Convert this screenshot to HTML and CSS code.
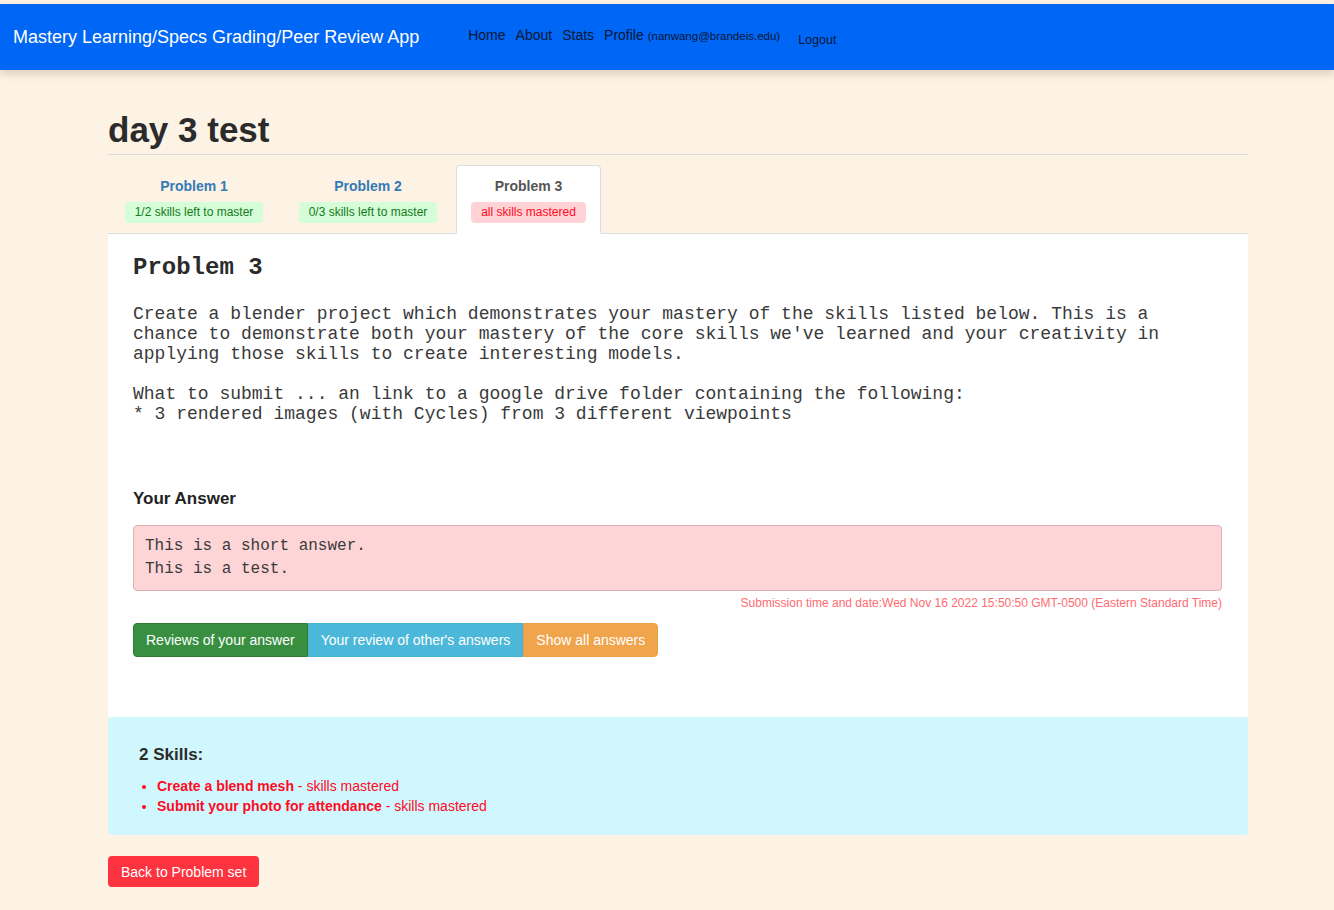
FILE: index.html
```html
<!DOCTYPE html>
<html>
<head>
<meta charset="utf-8">
<title>day 3 test</title>
<link rel="stylesheet" href="styles.css">
</head>
<body>
<nav class="navbar">
  <span class="brand">Mastery Learning/Specs Grading/Peer Review App</span>
  <ul class="nav-links">
    <li>Home</li>
    <li>About</li>
    <li>Stats</li>
    <li>Profile <small class="email">(nanwang@brandeis.edu)</small></li>
    <li class="logout">Logout</li>
  </ul>
</nav>

<main class="container">
  <h1 class="page-title">day 3 test</h1>

  <ul class="tabs">
    <li class="tab">
      <span class="tab-label link">Problem 1</span>
      <span class="badge badge-green">1/2 skills left to master</span>
    </li>
    <li class="tab">
      <span class="tab-label link">Problem 2</span>
      <span class="badge badge-green">0/3 skills left to master</span>
    </li>
    <li class="tab active">
      <span class="tab-label">Problem 3</span>
      <span class="badge badge-red">all skills mastered</span>
    </li>
  </ul>

  <section class="panel">
    <h2 class="problem-title">Problem 3</h2>
    <pre class="problem-text">Create a blender project which demonstrates your mastery of the skills listed below. This is a
chance to demonstrate both your mastery of the core skills we've learned and your creativity in
applying those skills to create interesting models.

What to submit ... an link to a google drive folder containing the following:
* 3 rendered images (with Cycles) from 3 different viewpoints</pre>

    <h4 class="answer-title">Your Answer</h4>
    <div class="answer-box">This is a short answer.<br>This is a test.</div>
    <p class="submission">Submission time and date:Wed Nov 16 2022 15:50:50 GMT-0500 (Eastern Standard Time)</p>

    <div class="btn-group">
      <button class="btn btn-green">Reviews of your answer</button>
      <button class="btn btn-cyan">Your review of other's answers</button>
      <button class="btn btn-orange">Show all answers</button>
    </div>
  </section>

  <section class="skills">
    <h3 class="skills-title">2 Skills:</h3>
    <ul class="skills-list">
      <li><strong>Create a blend mesh</strong> - skills mastered</li>
      <li><strong>Submit your photo for attendance</strong> - skills mastered</li>
    </ul>
  </section>

  <button class="btn-back">Back to Problem set</button>
</main>
</body>
</html>
```

FILE: styles.css
```css
* { box-sizing: border-box; }

html, body {
  margin: 0;
  padding: 0;
}

body {
  background: #fdf3e4;
  font-family: "Liberation Sans", Arial, Helvetica, sans-serif;
  color: #333;
  padding-top: 4px;
  min-height: 910px;
}

.navbar {
  height: 66px;
  background: #0066f5;
  display: flex;
  align-items: center;
  padding-left: 13px;
  box-shadow: 0 4px 8px rgba(120, 100, 70, 0.25);
}

.brand {
  color: #fff;
  font-size: 18px;
  margin-right: 49px;
}

.nav-links {
  list-style: none;
  margin: 0;
  padding: 0;
  display: flex;
  align-items: baseline;
  gap: 10px;
  margin-top: -4px;
}

.nav-links li {
  font-size: 14px;
  color: #0b1733;
}

.email {
  font-size: 11.5px;
}

.nav-links .logout {
  font-size: 12.5px;
  margin-left: 8px;
  position: relative;
  top: 4px;
}

.container {
  width: 1140px;
  margin: 0 86px 0 108px;
}

.page-title {
  font-size: 35px;
  font-weight: bold;
  margin: 40px 0 10px;
  line-height: 40px;
  padding-bottom: 4px;
  border-bottom: 1px solid #dcdcdc;
  color: #2b2b2b;
}

.tabs {
  list-style: none;
  margin: 0;
  padding: 0;
  display: flex;
  border-bottom: 1px solid #dddddd;
}

.tab {
  display: flex;
  flex-direction: column;
  align-items: center;
  padding: 12px 15px 10px;
  margin-right: 2px;
  margin-bottom: -1px;
  border: 1px solid transparent;
  border-radius: 4px 4px 0 0;
  width: 172px;
}

.tab.active {
  width: 145px;
  background: #fff;
  border-color: #ddd;
  border-bottom-color: #fff;
}

.tab-label {
  font-size: 14px;
  font-weight: bold;
  line-height: 17px;
  color: #555;
  margin-bottom: 7px;
}

.tab-label.link {
  color: #337ab7;
}

.badge {
  display: block;
  font-size: 12px;
  line-height: 21px;
  height: 21px;
  padding: 0 10px;
  border-radius: 4px;
  white-space: nowrap;
}

.badge-green {
  background: #d4fdd8;
  color: #147a1a;
}

.badge-red {
  background: #ffd3d6;
  color: #ff0a1e;
}

.panel {
  background: #fff;
  padding: 20px 26px 60px 25px;
}

.problem-title {
  font-family: "Liberation Mono", "Courier New", monospace;
  font-size: 24px;
  font-weight: bold;
  line-height: 28px;
  margin: 0 0 22px;
  color: #2b2b2b;
}

.problem-text {
  font-family: "Liberation Mono", "Courier New", monospace;
  font-size: 18px;
  line-height: 20px;
  margin: 0 0 65px;
  color: #3a3a3a;
}

.answer-title {
  font-size: 17px;
  font-weight: bold;
  line-height: 20px;
  margin: 0 0 16px;
  color: #222;
}

.answer-box {
  background: #fdd5d6;
  border: 1px solid #dcb2b3;
  border-radius: 4px;
  padding: 9px 11px;
  font-family: "Liberation Mono", "Courier New", monospace;
  font-size: 16px;
  line-height: 23px;
  color: #3a3a3a;
}

.submission {
  text-align: right;
  font-size: 12px;
  line-height: 14px;
  color: #ff6b70;
  margin: 5px 0 13px;
}

.btn-group {
  display: flex;
}

.btn {
  font-family: "Liberation Sans", Arial, sans-serif;
  font-size: 14px;
  color: #fff;
  height: 34px;
  padding: 0 12px;
  border: 1px solid transparent;
  cursor: pointer;
}

.btn-green {
  background: #378f3f;
  border-color: #2f7d36;
  border-radius: 4px 0 0 4px;
}

.btn-cyan {
  background: #4bb8d9;
  border-color: #46b3d4;
}

.btn-orange {
  background: #f0a44c;
  border-color: #ec9f45;
  border-radius: 0 4px 4px 0;
}

.skills {
  background: #d1f7fe;
  border-radius: 4px;
  padding: 27px 31px 19px;
}

.skills-title {
  font-size: 17px;
  font-weight: bold;
  line-height: 22px;
  margin: 0 0 10px;
  color: #2b2b2b;
}

.skills-list {
  margin: 0;
  padding-left: 18px;
  font-size: 14px;
  line-height: 20px;
  color: #ff0a1e;
}

.skills-list strong {
  font-weight: bold;
}

.btn-back {
  margin-top: 21px;
  background: #fd3340;
  color: #fff;
  border: none;
  border-radius: 4px;
  font-family: "Liberation Sans", Arial, sans-serif;
  font-size: 14px;
  height: 31px;
  padding: 0 13px;
  cursor: pointer;
}
```
